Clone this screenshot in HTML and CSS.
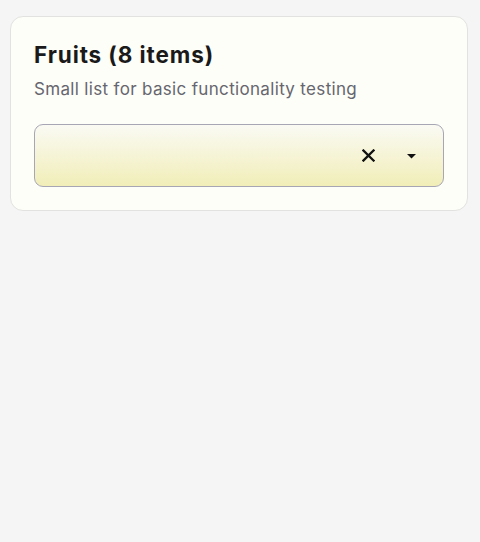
FILE: index.html
```html
<!DOCTYPE html>
<html>
<head>
<meta charset="utf-8">
<link rel="stylesheet" href="styles.css">
</head>
<body>
<div class="page">
  <section class="card">
    <h2 class="title">Fruits (8 items)</h2>
    <p class="subtitle">Small list for basic functionality testing</p>
    <div class="select">
      <div class="value"></div>
      <button class="icon clear" aria-label="Clear">
        <svg width="13" height="13" viewBox="0 0 13 13"><path d="M1.5 1.5 L11.5 11.5 M11.5 1.5 L1.5 11.5" stroke="#111" stroke-width="2.3" stroke-linecap="square"/></svg>
      </button>
      <button class="icon caret" aria-label="Open">
        <svg width="9" height="5" viewBox="0 0 9 5"><path d="M0 0 H9 L4.5 4.5 Z" fill="#111"/></svg>
      </button>
    </div>
  </section>
</div>
</body>
</html>
```
FILE: styles.css
```css
html, body {
  margin: 0;
  padding: 0;
  background: #f5f5f5;
  font-family: Inter, "Noto Sans", "Liberation Sans", sans-serif;
}
.page {
  padding: 16px 12px 0 10px;
  height: 542px;
  box-sizing: border-box;
}
.card {
  background: #fefef9;
  border: 1px solid #e2e2e0;
  border-radius: 13px;
  padding: 24px 23px 23px 23px;
}
.title {
  margin: 0;
  font-size: 22.5px;
  line-height: 28px;
  letter-spacing: 0.9px;
  font-weight: 700;
  color: #1a1a1a;
}
.subtitle {
  margin: 8px 0 0;
  font-size: 17px;
  line-height: 24px;
  letter-spacing: 0.33px;
  color: #66666e;
}
.select {
  margin-top: 23px;
  height: 63px;
  box-sizing: border-box;
  border: 1px solid #a6a6b4;
  border-radius: 9px;
  background: linear-gradient(#fafaf4, #f1eeb8);
  display: flex;
  align-items: center;
  padding: 0 27px 0 16px;
}
.value { flex: 1; }
.icon {
  background: none;
  border: 0;
  padding: 0;
  display: flex;
  align-items: center;
  justify-content: center;
}
.clear { width: 13px; height: 13px; margin-right: 32px; }
.caret { width: 9px; height: 5px; margin-top: 2px; }
```
